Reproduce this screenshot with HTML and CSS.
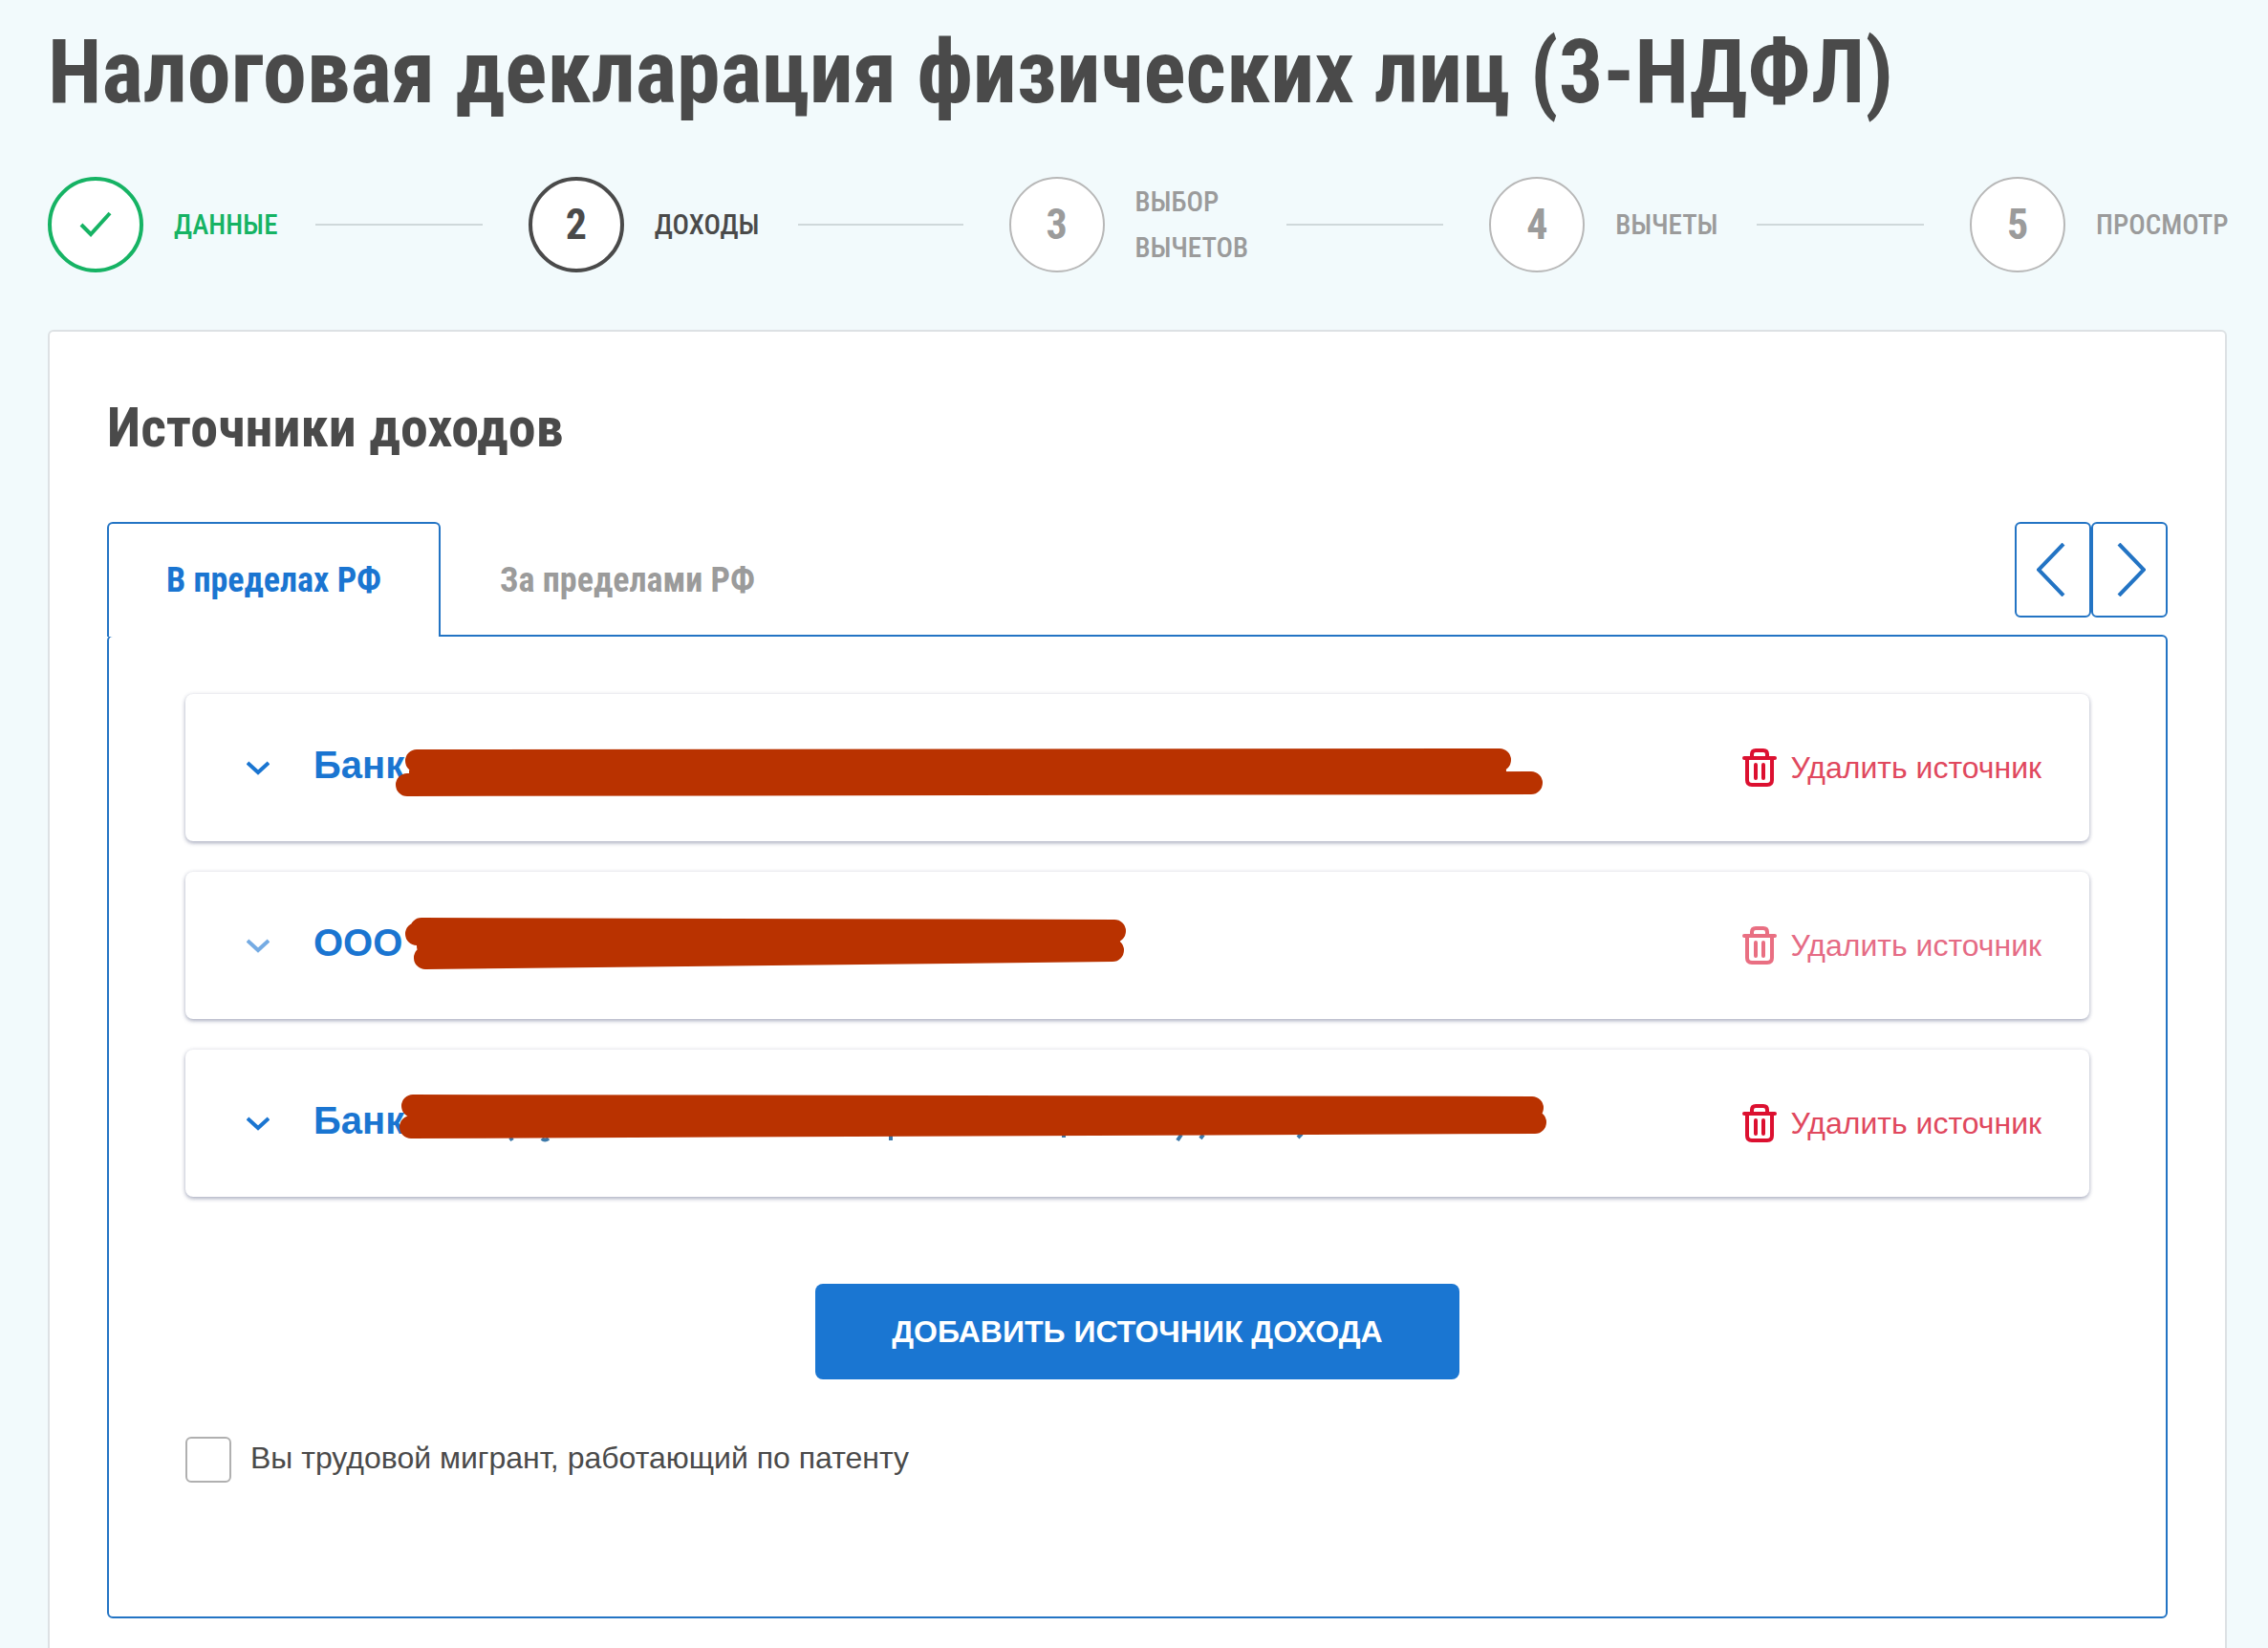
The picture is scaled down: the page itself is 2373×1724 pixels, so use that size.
FILE: index.html
```
<!DOCTYPE html>
<html lang="ru">
<head>
    <meta charset="UTF-8">
    <meta name="viewport" content="width=device-width, initial-scale=1.0">
    <title>Налоговая декларация физических лиц (3-НДФЛ)</title>
    <link rel="stylesheet" href="styles.css">
</head>
<body>

    <svg class="sprite" aria-hidden="true">
        <symbol id="icon-chevron" viewBox="0 0 24 16">
            <path d="M1 3l11 10L23 3" fill="none" stroke="currentColor" stroke-width="4"/>
        </symbol>
        <symbol id="icon-trash" viewBox="0 0 36 40">
            <path d="M10 9V6q0-4 4-4h8q4 0 4 4v3M5 11v22q0 5 5 5h16q5 0 5-5V11" fill="none" stroke="currentColor" stroke-width="4"/>
            <path d="M2 10h32M14 17v14M22 17v14" fill="none" stroke="currentColor" stroke-width="4" stroke-linecap="round"/>
        </symbol>
    </svg>

    <div class="page">
        <h1>Налоговая декларация физических лиц (3-НДФЛ)</h1>

        <ol class="steps">
            <li class="step done">
                <span class="circle">
                    <svg class="check" viewBox="0 0 34 28"><path d="M2 14l10 10L32 2" fill="none" stroke="currentColor" stroke-width="4"/></svg>
                </span>
                <span class="step-name">Данные</span>
            </li>
            <li class="step current">
                <span class="circle">2</span>
                <span class="step-name">Доходы</span>
            </li>
            <li class="step">
                <span class="circle">3</span>
                <span class="step-name">Выбор<br>вычетов</span>
            </li>
            <li class="step">
                <span class="circle">4</span>
                <span class="step-name">Вычеты</span>
            </li>
            <li class="step">
                <span class="circle">5</span>
                <span class="step-name">Просмотр</span>
            </li>
        </ol>

        <main class="card">
            <h2>Источники доходов</h2>

            <div class="tabs">
                <button class="tab active" type="button">В пределах РФ</button>
                <button class="tab" type="button">За пределами РФ</button>
                <div class="arrows">
                    <button class="arrow" type="button" aria-label="Назад">
                        <svg viewBox="0 0 34 56"><path d="M28 1L2 28l26 27" fill="none" stroke="currentColor" stroke-width="4"/></svg>
                    </button>
                    <button class="arrow" type="button" aria-label="Вперёд">
                        <svg viewBox="0 0 34 56"><path d="M6 1l26 27L6 55" fill="none" stroke="currentColor" stroke-width="4"/></svg>
                    </button>
                </div>
            </div>

            <section class="panel">
                <ul class="sources">
                    <li class="source">
                        <svg class="chevron"><use href="#icon-chevron"/></svg>
                        <span class="source-name">Банк</span>
                        <svg class="marker" viewBox="0 0 1300 154"><path d="M242 70L1375 69M246 82L1370 81M232 95L1408 93"/></svg>
                        <button class="delete" type="button"><svg class="trash"><use href="#icon-trash"/></svg>Удалить источник</button>
                    </li>
                    <li class="source faded">
                        <svg class="chevron"><use href="#icon-chevron"/></svg>
                        <span class="source-name">ООО</span>
                        <svg class="marker" viewBox="0 0 1300 154"><path d="M247 60L972 62M242 65L972 62M254 78L966 72M251 90L970 82"/></svg>
                        <button class="delete" type="button"><svg class="trash"><use href="#icon-trash"/></svg>Удалить источник</button>
                    </li>
                    <li class="source">
                        <svg class="chevron"><use href="#icon-chevron"/></svg>
                        <span class="source-name">Банк</span>
                        <svg class="marker" viewBox="0 0 1300 154">
                            <path class="tails" d="M340 92l2 3M373 93q3 3 7 0M738 90v5M919 90v2M1042 89l-4 6M1065 89l-3 4M1168 88l-4 4"/>
                            <path d="M238 59L1409 61M236 81L1412 76"/>
                        </svg>
                        <button class="delete" type="button"><svg class="trash"><use href="#icon-trash"/></svg>Удалить источник</button>
                    </li>
                </ul>

                <button class="add" type="button">Добавить источник дохода</button>

                <label class="patent">
                    <input type="checkbox">
                    Вы трудовой мигрант, работающий по патенту
                </label>
            </section>
        </main>
    </div>

</body>
</html>
```

FILE: styles.css
```
* {
    margin: 0;
    padding: 0;
    box-sizing: border-box;
}

body {
    font-family: 'Liberation Sans', Arial, sans-serif;
    font-size: 32px;
    line-height: 48px;
    background-color: #f2fafc;
    color: #4a4a4a;
    height: 100vh;
    overflow: hidden;
}

button {
    font: inherit;
    background: none;
    border: none;
    cursor: pointer;
}

.sprite {
    display: none;
}

.page {
    padding: 16px 43px 0 50px;
}

h1, h2, .circle, .step-name, .tab {
    font-family: 'Roboto Condensed', Roboto, sans-serif;
    font-weight: bold;
}

h1 {
    font-size: 92px;
    line-height: 120px;
    white-space: nowrap;
}

/* Steps */
.steps {
    display: grid;
    grid-template-columns: repeat(4, 1fr) 269px;
    margin-top: 49px;
    list-style: none;
}

.step {
    display: flex;
    align-items: center;
    height: 100px;
    color: #9b9b9b;
}

.circle {
    display: flex;
    align-items: center;
    justify-content: center;
    flex: none;
    width: 100px;
    height: 100px;
    margin-right: 32px;
    border: 2px solid #b8b8b8;
    border-radius: 50%;
    background-color: #fff;
    font-size: 44px;
}

.step-name {
    font-size: 29px;
    font-weight: 500;
    text-transform: uppercase;
}

.step:not(:last-child)::after {
    content: '';
    flex: 1;
    height: 2px;
    margin: 0 48px 0 40px;
    background-color: #cfd8da;
}

.done {
    color: #16b364;
}

.current {
    color: #4a4a4a;
}

.done .circle,
.current .circle {
    border: 4px solid;
}

.check {
    width: 34px;
    height: 28px;
}

/* Card */
.card {
    margin-top: 60px;
    padding: 60px;
    border: 2px solid #dde1e4;
    border-radius: 6px;
    background-color: #fff;
}

h2 {
    font-size: 58px;
    line-height: 80px;
}

.tabs {
    display: flex;
    align-items: flex-start;
    height: 118px;
    margin-top: 59px;
}

.tab {
    height: 120px;
    padding: 0 60px;
    border: 2px solid transparent;
    border-bottom: none;
    border-radius: 6px 6px 0 0;
    color: #9b9b9b;
    font-size: 36px;
}

.tab.active {
    position: relative;
    border-color: #2374c4;
    background-color: #fff;
    color: #1a75d1;
}

.arrows {
    display: flex;
    margin-left: auto;
}

.arrow {
    display: flex;
    align-items: center;
    justify-content: center;
    width: 80px;
    height: 100px;
    border: 2px solid #2374c4;
    border-radius: 6px;
    color: #2374c4;
}

.arrow svg {
    width: 34px;
    height: 56px;
}

.panel {
    padding: 60px 80px 140px;
    border: 2px solid #2374c4;
    border-radius: 6px;
}

/* Sources */
.sources {
    list-style: none;
}

.source {
    position: relative;
    display: flex;
    align-items: center;
    height: 154px;
    margin-bottom: 32px;
    padding: 0 50px 0 64px;
    border-radius: 8px;
    box-shadow: 0 2px 4px rgba(60, 70, 110, 0.4), 0 0 4px rgba(60, 70, 110, 0.1);
}

.chevron {
    width: 24px;
    height: 16px;
    color: #1a75d1;
}

.source-name {
    margin-left: 46px;
    padding-bottom: 6px;
    color: #1a75d1;
    font-size: 40px;
    font-weight: bold;
}

/* strokes that hide the rest of the name */
.marker {
    position: absolute;
    top: 0;
    left: 0;
    width: 1300px;
    height: 154px;
    overflow: visible;
    fill: none;
    stroke: #b93200;
    stroke-width: 24px;
    stroke-linecap: round;
}

.marker .tails {
    stroke: #3b78a8;
    stroke-width: 4px;
    stroke-linecap: butt;
}

.delete {
    display: flex;
    align-items: center;
    margin-left: auto;
    color: #e0485e;
}

.trash {
    width: 36px;
    height: 40px;
    margin-right: 14px;
    color: #dc1030;
}

.faded .chevron,
.faded .trash {
    opacity: 0.6;
}

.faded .delete {
    color: #e56b85;
}

.add {
    display: block;
    height: 100px;
    margin: 91px auto 60px;
    padding: 0 80px;
    border-radius: 8px;
    background-color: #1a76d2;
    color: #fff;
    font-weight: bold;
    text-transform: uppercase;
}

.patent {
    display: flex;
    gap: 20px;
    line-height: 44px;
}

.patent input {
    appearance: none;
    width: 48px;
    height: 48px;
    border: 2px solid #b0b0b0;
    border-radius: 6px;
    background-color: #fff;
}
```
